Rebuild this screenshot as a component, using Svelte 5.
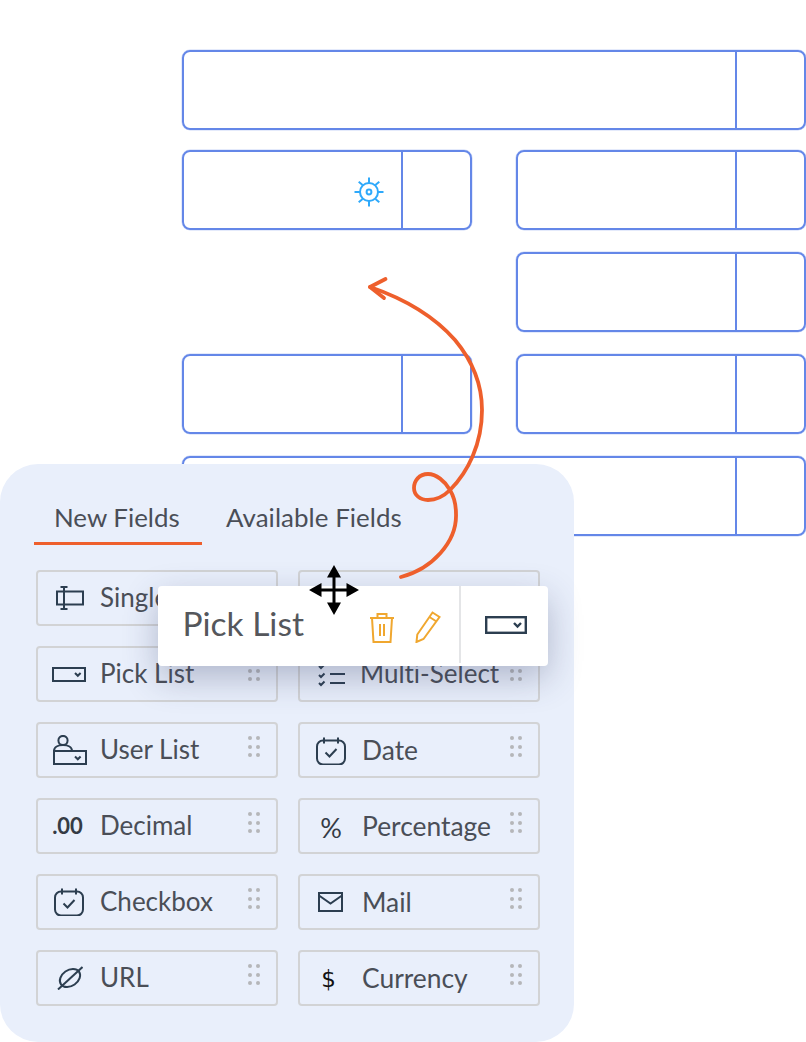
<script>
  // slot rows of the layout canvas
  const rows = [
    { gap: 0, slots: ['wide'] },
    { gap: 20, slots: ['half gear', 'half'] },
    { gap: 22, slots: ['empty', 'half'] },
    { gap: 22, slots: ['half', 'half'] },
    { gap: 22, slots: ['wide'] }
  ];

  const icons = {
    single: { w: 28, h: 24, d: '<rect x="1" y="5.5" width="26" height="13"/><path d="M8 1v22M4.500 1h7M4.500 23h7"/>' },
    multi: { w: 26, h: 24, d: '<path d="M1 2h10M1 8h24M1 14h24M1 20h24"/>' },
    pick: { w: 34, h: 15, dx: -1, dy: 1, d: '<rect x="1" y="1" width="32" height="13"/><path d="M23 6l2.800 2.800L28.600 6"/>' },
    select: { w: 28, h: 24, d: '<path d="M1 3l2 2 3.500-3.500M1 12l2 2 3.500-3.500M1 20l2 2 3.500-3.500M12 11h15M12 20h15"/>' },
    user: { w: 34, h: 30, d: '<circle cx="10" cy="5.500" r="4.600"/><path d="M1 29V16h32V29zM1 16C1 12 5 10 10 10s9 2 9 6M22 21.500l2.800 2.800 2.800-2.800"/>' },
    date: { w: 30, h: 28, dx: -1, d: '<rect x="1" y="3.500" width="28" height="24" rx="6"/><path d="M8 .5v6M22 .5v6M9.500 15.500l4 4 7-7.500"/>' },
    url: { w: 26, h: 24, d: '<ellipse cx="13" cy="12" rx="11" ry="8" transform="rotate(-35 13 12)"/><path d="M1 23.500L25.500 1"/>' },
    mail: { w: 25, h: 20, dx: -2, dy: -1, d: '<rect x="1" y="1" width="23" height="18"/><path d="M1 3.500l11.500 8 11.500-8"/>' }
  };

  const left = [
    { name: 'Single Line', icon: 'single' },
    { name: 'Pick List', icon: 'pick' },
    { name: 'User List', icon: 'user' },
    { name: 'Decimal', glyph: '.00', cls: 'dec' },
    { name: 'Checkbox', icon: 'date' },
    { name: 'URL', icon: 'url' }
  ];
  const right = [
    { name: 'Multi-Line', icon: 'multi' },
    { name: 'Multi-Select', icon: 'select', tight: true },
    { name: 'Date', icon: 'date' },
    { name: 'Percentage', glyph: '%', cls: 'pct' },
    { name: 'Mail', icon: 'mail' },
    { name: 'Currency', glyph: '$', cls: 'cur' }
  ];
  const columns = [left, right];
</script>

<div class="stage">
  <div class="canvas">
    {#each rows as row}
      <div class="row" style="margin-top: {row.gap}px">
        {#each row.slots as slot}
          {#if slot === 'empty'}
            <div class="slot-empty"></div>
          {:else}
            <div class="slot" class:wide={slot === 'wide'}>
              <div class="slot-main">
                {#if slot.includes('gear')}
                  <svg class="gear" width="30" height="30" viewBox="0 0 30 30" fill="none" stroke="#2ea9fb" stroke-width="2">
                    <circle cx="15" cy="15" r="9" />
                    <circle cx="15" cy="15" r="2.400" />
                    <path d="M15 .5V6M15 24v5.500M.5 15H6M24 15h5.500M4.700 4.700l3.900 3.200M21.400 22.100l3.900 3.200M25.300 4.700l-3.900 3.200M8.600 22.100l-3.900 3.200" />
                  </svg>
                {/if}
              </div>
              <div class="slot-side"></div>
            </div>
          {/if}
        {/each}
      </div>
    {/each}
  </div>

  <section class="panel">
    <div class="tabs">
      <div class="tab active">New Fields</div>
      <div class="tab">Available Fields</div>
    </div>
    <div class="fields">
      {#each columns as col, c}
        <div class="col" class:col-right={c === 1}>
          {#each col as f}
            <div class="field">
              <span class="ficon">
                {#if f.icon}
                  <svg
                    width={icons[f.icon].w}
                    height={icons[f.icon].h}
                    viewBox="0 0 {icons[f.icon].w} {icons[f.icon].h}"
                    fill="none"
                    stroke="#2c3e50"
                    stroke-width="2"
                    style="transform: translate({icons[f.icon].dx ?? 0}px, {icons[f.icon].dy ?? 0}px)"
                  >
                    {@html icons[f.icon].d}
                  </svg>
                {:else}
                  <span class={f.cls}>{f.glyph}</span>
                {/if}
              </span>
              <span class="fname" class:tight={f.tight}>{f.name}</span>
              <span class="dots">
                {#each Array(6) as _}<i></i>{/each}
              </span>
            </div>
          {/each}
        </div>
      {/each}
    </div>
  </section>

  <div class="drag-card">
    <div class="drag-title">Pick List</div>
    <div class="drag-actions">
      <svg width="26" height="31" viewBox="0 0 26 31" fill="none" stroke="#f0a72f" stroke-width="2">
        <path d="M1 6h24M3 6l1.500 24h17L23 6M8.500 6V2h9v4M11 12v12M15 12v12" />
      </svg>
      <svg width="26" height="32" viewBox="0 0 26 32" fill="none" stroke="#f0a72f" stroke-width="2">
        <path d="M17.500 1.500l7 4.500L8.500 28 1.500 31l.8-7.500zM14.500 6l7 4.500" />
      </svg>
    </div>
    <div class="drag-type">
      <svg width="42" height="18" viewBox="0 0 42 18" fill="none" stroke="#2c3e50" stroke-width="2.400">
        <rect x="1.200" y="1.200" width="39.600" height="15.600" />
        <path d="M29 7l3.500 3.500L36 7" />
      </svg>
    </div>
  </div>

  <svg class="arrow" width="130" height="320" viewBox="360 270 130 320" fill="none" stroke="#ee5f2c" stroke-width="3.800" stroke-linecap="round" stroke-linejoin="round">
    <path d="M401 577C432 569 457 542 456 514C456 503 453 495 450 490C445 481 436 474 428 474C419 474 414 481 414 488C414 495 420 500 428 500C436 500 444 496 450 490C468 472 482 444 482 410C482 380 470 358 455 340C433 315 402 298 370 287" />
    <path d="M385.500 279L370 287L384 298" />
  </svg>

  <svg class="move" width="50" height="50" viewBox="0 0 50 50" fill="#000" stroke="none">
    <path d="M25 0l7 12.500h-5.500V23.500H37.500V18L50 25 37.500 32v-5.500H26.500v11H32L25 50l-7-12.500h5.500v-11H12.500V32L0 25l12.500-7v5.500H23.500V12.500H18z" />
  </svg>
</div>

<style>
  :global(body) {
    background: #fff;
  }

  .stage {
    position: relative;
    width: 806px;
    height: 1042px;
    overflow: hidden;
    background: #fff;
    font-family: Lato, "Open Sans", sans-serif;
    font-variant-ligatures: none;
  }

  .canvas {
    padding: 50px 0 0 182px;
  }

  .row {
    display: flex;
    justify-content: space-between;
    width: 624px;
    height: 80px;
  }

  .slot-empty {
    width: 290px;
  }

  .slot {
    display: flex;
    box-sizing: border-box;
    width: 290px;
    height: 80px;
    border: 2px solid #6487e8;
    border-radius: 8px;
    box-shadow: 0 0 0 0.5px rgba(100, 135, 232, 0.35);
  }

  .slot.wide {
    width: 624px;
  }

  .slot-main {
    flex: 1;
    display: flex;
    align-items: center;
    justify-content: flex-end;
    padding-right: 17px;
  }

  .gear {
    margin-top: 3px;
  }

  .slot-side {
    box-sizing: border-box;
    width: 69px;
    height: 77px;
    border-left: 2px solid #6487e8;
  }

  .panel {
    position: absolute;
    left: 0;
    top: 464px;
    box-sizing: border-box;
    width: 574px;
    height: 578px;
    padding: 0 34px;
    background: #e9effb;
    border-radius: 38px;
  }

  .tabs {
    display: flex;
    gap: 24px;
    height: 81px;
  }

  .tab {
    box-sizing: border-box;
    height: 81px;
    padding: 36px 0 0 0;
    font-size: 25.900px;
    line-height: 34px;
    letter-spacing: 0.06px;
    color: #4a4e57;
  }

  .tab.active {
    width: 168px;
    padding-left: 20px;
    letter-spacing: 0;
    border-bottom: 3px solid #ee5f2c;
  }

  .fields {
    display: flex;
    gap: 20px;
    padding: 25px 0 0 2px;
  }

  .col {
    display: flex;
    flex-direction: column;
    gap: 20px;
  }

  .field {
    position: relative;
    display: flex;
    align-items: center;
    box-sizing: border-box;
    width: 242px;
    height: 56px;
    padding-bottom: 3px;
    border: 2px solid #d2d3d5;
    border-radius: 4px;
  }

  .col-right .field {
    padding-bottom: 0;
  }

  .ficon {
    display: flex;
    align-items: center;
    justify-content: center;
    box-sizing: border-box;
    flex: none;
    width: 62px;
    padding-left: 2px;
    margin-top: 2px;
  }

  .fname {
    font-size: 26px;
    line-height: 32px;
    color: #4a4e57;
    white-space: nowrap;
  }

  .col-right .fname {
    font-size: 26.400px;
  }

  .col-right .fname.tight {
    margin: -2px 0 0 -2px;
    font-size: 26px;
  }

  .dec {
    font-size: 22px;
    font-weight: 700;
    color: #353b45;
    margin-left: -5px;
  }

  .pct {
    font-size: 27px;
    color: #353b45;
    margin-left: -2px;
  }

  .cur {
    font-family: "DejaVu Sans", sans-serif;
    font-size: 23px;
    color: #111;
    margin-left: -7px;
  }

  .dots {
    position: absolute;
    right: 16px;
    top: 12px;
    display: grid;
    grid-template-columns: 4px 4px;
    gap: 4.500px 4px;
  }

  .field:first-child .dots {
    display: none;
  }

  .dots i {
    width: 4px;
    height: 4px;
    border-radius: 50%;
    background: #b5b6b9;
  }

  .drag-card {
    position: absolute;
    left: 158px;
    top: 586px;
    display: flex;
    align-items: stretch;
    width: 390px;
    height: 80px;
    background: #fff;
    border-radius: 4px;
    box-shadow: 0 12px 34px rgba(55, 65, 105, 0.32);
  }

  .drag-title {
    width: 210px;
    padding-left: 24.500px;
    box-sizing: border-box;
    font-size: 33.500px;
    line-height: 74px;
    color: #55575c;
  }

  .drag-actions {
    display: flex;
    align-items: center;
    gap: 20px;
    width: 91px;
    padding: 2px 0 0 1px;
    box-sizing: border-box;
  }

  .drag-type {
    flex: 1;
    display: flex;
    align-items: center;
    justify-content: center;
    height: 77px;
    padding-left: 2px;
    border-left: 2px solid #e4e5e7;
  }

  .arrow {
    position: absolute;
    left: 360px;
    top: 270px;
  }

  .move {
    position: absolute;
    left: 309px;
    top: 565px;
  }
</style>
